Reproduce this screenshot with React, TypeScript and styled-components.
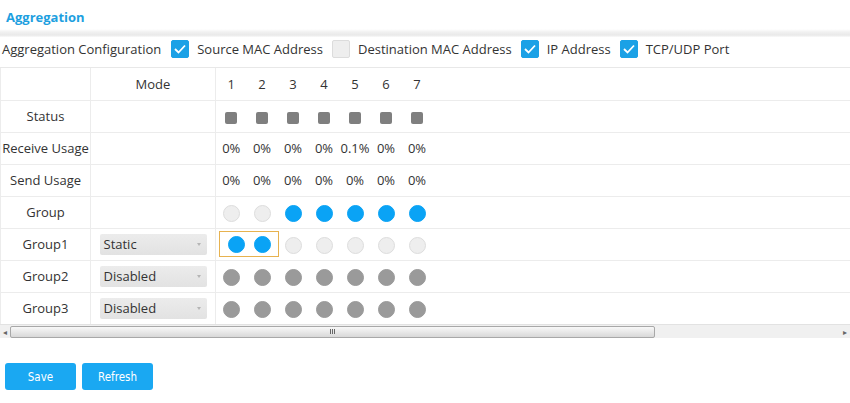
import { createGlobalStyle } from 'styled-components';
import styled from 'styled-components';

const GlobalStyle = createGlobalStyle`
  html, body {
    margin: 0;
    padding: 0;
    background: #fff;
    font-family: 'Open Sans', 'Noto Sans', sans-serif;
    color: #333;
  }
`;

const ports = [1, 2, 3, 4, 5, 6, 7];
const receive = ['0%', '0%', '0%', '0%', '0.1%', '0%', '0%'];
const send = ['0%', '0%', '0%', '0%', '0%', '0%', '0%'];
const groupRow = ['idle', 'idle', 'on', 'on', 'on', 'on', 'on'];
const group1 = ['on', 'on', 'idle', 'idle', 'idle', 'idle', 'idle'];
const disabled = ['off', 'off', 'off', 'off', 'off', 'off', 'off'];

const options = [
  { label: 'Source MAC Address', checked: true },
  { label: 'Destination MAC Address', checked: false },
  { label: 'IP Address', checked: true },
  { label: 'TCP/UDP Port', checked: true },
];

type DotKind = 'on' | 'idle' | 'off';

const CheckMark = () => (
  <svg width="12" height="10" viewBox="0 0 12 10">
    <path d="M1 5 L4.5 8.5 L11 1.5" fill="none" stroke="#fff" strokeWidth="1.8" />
  </svg>
);

export default function App() {
  return (
    <Page>
      <GlobalStyle />
      <Title>Aggregation</Title>
      <Band />
      <ConfigRow>
        <ConfigLabel>Aggregation Configuration</ConfigLabel>
        {options.map((o) => (
          <Option key={o.label}>
            <Box $checked={o.checked}>{o.checked && <CheckMark />}</Box>
            <span>{o.label}</span>
          </Option>
        ))}
      </ConfigRow>
      <TableWrap>
        <Table>
          <colgroup>
            <col style={{ width: 90 }} />
            <col style={{ width: 125 }} />
            {ports.map((p) => (
              <col key={p} style={{ width: 31 }} />
            ))}
            <col />
          </colgroup>
          <tbody>
            <Row>
              <LabelCell />
              <ModeCell>Mode</ModeCell>
              {ports.map((p) => (
                <PortCell key={p}>{p}</PortCell>
              ))}
              <Filler />
            </Row>
            <Row>
              <LabelCell>Status</LabelCell>
              <ModeCell />
              {ports.map((p) => (
                <PortCell key={p}>
                  <Square />
                </PortCell>
              ))}
              <Filler />
            </Row>
            <Row>
              <LabelCell>Receive Usage</LabelCell>
              <ModeCell />
              {receive.map((v, i) => (
                <PortCell key={i}>{v}</PortCell>
              ))}
              <Filler />
            </Row>
            <Row>
              <LabelCell>Send Usage</LabelCell>
              <ModeCell />
              {send.map((v, i) => (
                <PortCell key={i}>{v}</PortCell>
              ))}
              <Filler />
            </Row>
            <Row>
              <LabelCell>Group</LabelCell>
              <ModeCell />
              {groupRow.map((k, i) => (
                <PortCell key={i}>
                  <Dot $kind={k as DotKind} />
                </PortCell>
              ))}
              <Filler />
            </Row>
            <Row>
              <LabelCell>Group1</LabelCell>
              <ModeCell>
                <Select>
                  <span>Static</span>
                  <Caret />
                </Select>
              </ModeCell>
              <PortCell colSpan={2}>
                <Selection>
                  {group1.slice(0, 2).map((k, i) => (
                    <Dot key={i} $kind={k as DotKind} />
                  ))}
                </Selection>
              </PortCell>
              {group1.slice(2).map((k, i) => (
                <PortCell key={i}>
                  <Dot $kind={k as DotKind} />
                </PortCell>
              ))}
              <Filler />
            </Row>
            {['Group2', 'Group3'].map((g) => (
              <Row key={g}>
                <LabelCell>{g}</LabelCell>
                <ModeCell>
                  <Select>
                    <span>Disabled</span>
                    <Caret />
                  </Select>
                </ModeCell>
                {disabled.map((k, i) => (
                  <PortCell key={i}>
                    <Dot $kind={k as DotKind} />
                  </PortCell>
                ))}
                <Filler />
              </Row>
            ))}
          </tbody>
        </Table>
        <ScrollBar>
          <Arrow>◂</Arrow>
          <Track>
            <Thumb>
              <Grip>
                <i />
                <i />
                <i />
              </Grip>
            </Thumb>
          </Track>
          <Arrow>▸</Arrow>
        </ScrollBar>
      </TableWrap>
      <Buttons>
        <Button>Save</Button>
        <Button>Refresh</Button>
      </Buttons>
    </Page>
  );
}

const Page = styled.div`
  width: 850px;
  display: flex;
  flex-direction: column;
`;

const Title = styled.div`
  font-size: 13px;
  font-weight: 700;
  color: #1e9fe0;
  padding: 8px 0 0 6px;
  height: 26px;
  box-sizing: border-box;
`;

const Band = styled.div`
  height: 8px;
  background: linear-gradient(#ffffff, #f0f0f0 40%, #e9e9e9 75%, #fafafa);
  margin-top: 3px;
`;

const ConfigRow = styled.div`
  display: flex;
  align-items: flex-start;
  height: 31px;
  box-sizing: border-box;
  padding: 3px 0 0 2px;
  font-size: 13px;
  line-height: 18px;
  border-bottom: 1px solid #e8e8e8;
`;

const ConfigLabel = styled.span`
  margin-right: 1px;
`;

const Option = styled.label`
  display: flex;
  align-items: center;
  gap: 8px;
  margin-left: 9px;
`;

const Box = styled.span<{ $checked: boolean }>`
  width: 18px;
  height: 18px;
  border-radius: 2px;
  box-sizing: border-box;
  display: flex;
  align-items: center;
  justify-content: center;
  background: ${(p) => (p.$checked ? '#1ba1e6' : '#eeeeee')};
  border: 1px solid ${(p) => (p.$checked ? '#1ba1e6' : '#dcdcdc')};
`;

const TableWrap = styled.div`
  display: flex;
  flex-direction: column;
`;

const Table = styled.table`
  width: 100%;
  border-collapse: collapse;
  table-layout: fixed;
  font-size: 13px;
`;

const Row = styled.tr`
  height: 32px;
  border-bottom: 1px solid #ececec;
  &:last-child {
    border-bottom: none;
  }
`;

const LabelCell = styled.td`
  text-align: center;
  padding: 0;
  white-space: nowrap;
  border-left: 1px solid #ececec;
  border-right: 1px solid #ececec;
`;

const ModeCell = styled.td`
  text-align: center;
  padding: 0;
  border-right: 1px solid #ececec;
  & > div {
    margin: 0 auto;
  }
`;

const PortCell = styled.td`
  text-align: center;
  padding: 0;
  white-space: nowrap;
  vertical-align: middle;
`;

const Filler = styled.td``;

const Square = styled.span`
  display: inline-block;
  width: 12px;
  height: 12px;
  border-radius: 2px;
  background: #7f7f7f;
  vertical-align: middle;
`;

const dotColors: Record<DotKind, [string, string]> = {
  on: ['#0aa3f5', '#0aa3f5'],
  idle: ['#eeeeee', '#dddddd'],
  off: ['#9a9a9a', '#9a9a9a'],
};

const Dot = styled.span<{ $kind: DotKind }>`
  display: inline-block;
  width: 17px;
  height: 17px;
  border-radius: 50%;
  box-sizing: border-box;
  background: ${(p) => dotColors[p.$kind][0]};
  border: 1px solid ${(p) => dotColors[p.$kind][1]};
  vertical-align: middle;
`;

const Selection = styled.div`
  display: flex;
  justify-content: space-around;
  align-items: center;
  margin: 0 0 0 3px;
  width: 60px;
  height: 26px;
  box-sizing: border-box;
  border: 1px solid #e7b24f;
  padding: 0 3px;
`;

const Select = styled.div`
  display: flex;
  align-items: center;
  justify-content: space-between;
  width: 107px;
  height: 21px;
  box-sizing: border-box;
  padding: 0 6px 0 4px;
  background: linear-gradient(#ececec, #e2e2e2);
  border-radius: 2px;
  font-size: 13px;
  text-align: left;
`;

const Caret = styled.span`
  width: 0;
  height: 0;
  border-left: 2.5px solid transparent;
  border-right: 2.5px solid transparent;
  border-top: 3px solid #b5b5b5;
`;

const ScrollBar = styled.div`
  display: flex;
  align-items: center;
  height: 13px;
  background: #f0f0f0;
  border-top: 1px solid #e2e2e2;
`;

const Arrow = styled.span`
  width: 10px;
  font-size: 8px;
  color: #666;
  text-align: center;
  line-height: 13px;
`;

const Track = styled.div`
  flex: 1;
  height: 100%;
  display: flex;
  align-items: center;
`;

const Thumb = styled.div`
  width: 645px;
  height: 12px;
  box-sizing: border-box;
  border: 1px solid #a8a8a8;
  border-radius: 2px;
  background: linear-gradient(#f8f8f8, #d8d8d8);
  display: flex;
  justify-content: center;
  align-items: center;
`;

const Grip = styled.span`
  display: flex;
  gap: 1px;
  & > i {
    width: 1px;
    height: 5px;
    background: #666;
  }
`;

const Buttons = styled.div`
  display: flex;
  gap: 6px;
  padding: 25px 0 0 5px;
`;

const Button = styled.button`
  width: 71px;
  height: 27px;
  border: none;
  border-radius: 3px;
  background: #1aa8f2;
  color: #fff;
  font-family: 'DejaVu Sans Condensed', 'DejaVu Sans', sans-serif;
  font-stretch: condensed;
  font-size: 11.5px;
  padding: 0;
`;
